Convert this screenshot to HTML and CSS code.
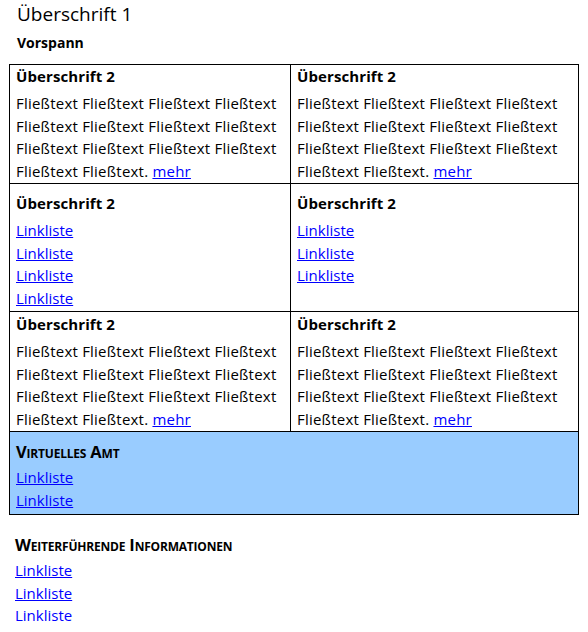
FILE: index.html
```html
<!DOCTYPE html>
<html lang="de">
<head>
<meta charset="utf-8">
<title>Seite</title>
<link rel="stylesheet" href="styles.css">
</head>
<body>
<div class="page">
  <h1 class="title">Überschrift 1</h1>
  <p class="lead">Vorspann</p>
  <div class="grid">
    <div class="cell cell-top">
      <h2 class="h2">Überschrift 2</h2>
      <p class="text">Fließtext Fließtext Fließtext Fließtext Fließtext Fließtext Fließtext Fließtext Fließtext Fließtext Fließtext Fließtext Fließtext Fließtext. <a href="#">mehr</a></p>
    </div>
    <div class="cell cell-top">
      <h2 class="h2">Überschrift 2</h2>
      <p class="text">Fließtext Fließtext Fließtext Fließtext Fließtext Fließtext Fließtext Fließtext Fließtext Fließtext Fließtext Fließtext Fließtext Fließtext. <a href="#">mehr</a></p>
    </div>
    <div class="cell cell-links">
      <h2 class="h2">Überschrift 2</h2>
      <ul class="links">
        <li><a href="#">Linkliste</a></li>
        <li><a href="#">Linkliste</a></li>
        <li><a href="#">Linkliste</a></li>
        <li><a href="#">Linkliste</a></li>
      </ul>
    </div>
    <div class="cell cell-links">
      <h2 class="h2">Überschrift 2</h2>
      <ul class="links">
        <li><a href="#">Linkliste</a></li>
        <li><a href="#">Linkliste</a></li>
        <li><a href="#">Linkliste</a></li>
      </ul>
    </div>
    <div class="cell">
      <h2 class="h2">Überschrift 2</h2>
      <p class="text">Fließtext Fließtext Fließtext Fließtext Fließtext Fließtext Fließtext Fließtext Fließtext Fließtext Fließtext Fließtext Fließtext Fließtext. <a href="#">mehr</a></p>
    </div>
    <div class="cell">
      <h2 class="h2">Überschrift 2</h2>
      <p class="text">Fließtext Fließtext Fließtext Fließtext Fließtext Fließtext Fließtext Fließtext Fließtext Fließtext Fließtext Fließtext Fließtext Fließtext. <a href="#">mehr</a></p>
    </div>
    <div class="cell cell-wide cell-amt">
      <h3 class="caps">Virtuelles Amt</h3>
      <ul class="links">
        <li><a href="#">Linkliste</a></li>
        <li><a href="#">Linkliste</a></li>
      </ul>
    </div>
  </div>
  <div class="more">
    <h3 class="caps">Weiterführende Informationen</h3>
    <ul class="links">
      <li><a href="#">Linkliste</a></li>
      <li><a href="#">Linkliste</a></li>
      <li><a href="#" class="plain">Linkliste</a></li>
    </ul>
  </div>
</div>
</body>
</html>
```

FILE: styles.css
```css
html, body {
  margin: 0;
  padding: 0;
  background: #ffffff;
}
body {
  font-family: "Open Sans", "DejaVu Sans", sans-serif;
  color: #000000;
  font-size: 15px;
  line-height: 22.5px;
}
.page {
  padding: 2px 9px 0 9px;
  width: 570px;
}
.title {
  margin: 0 0 0 8px;
  font-size: 19px;
  font-weight: normal;
  line-height: 24px;
}
.lead {
  margin: 6px 0 10px 8px;
  font-size: 14px;
  font-weight: bold;
  line-height: 22px;
}
.grid {
  display: grid;
  grid-template-columns: 281px 1fr;
  border-top: 1px solid #000;
  border-left: 1px solid #000;
}
.cell {
  border-right: 1px solid #000;
  border-bottom: 1px solid #000;
  padding: 1px 6px 1px 6px;
}
.cell-top {
  padding-top: 0;
}
.cell-links {
  padding-top: 8px;
  padding-bottom: 2px;
}
.cell-wide {
  grid-column: 1 / 3;
}
.cell-amt {
  background: #99ccff;
  padding-top: 9px;
  padding-bottom: 3px;
}
.h2 {
  margin: 0 0 5px 0;
  font-size: 15px;
  font-weight: bold;
  line-height: 22px;
  letter-spacing: 0.1px;
}
.text {
  margin: 0;
  letter-spacing: 0.22px;
}
.links {
  list-style: none;
  margin: 0;
  padding: 0;
}
a {
  color: #0000ff;
  text-decoration: underline;
}
a.plain {
  text-decoration: none;
}
.caps {
  margin: 0 0 3px 0;
  font-size: 16.5px;
  font-weight: bold;
  font-variant: small-caps;
  line-height: 22px;
  letter-spacing: -0.2px;
}
.more {
  padding: 19px 0 0 6px;
}
```
